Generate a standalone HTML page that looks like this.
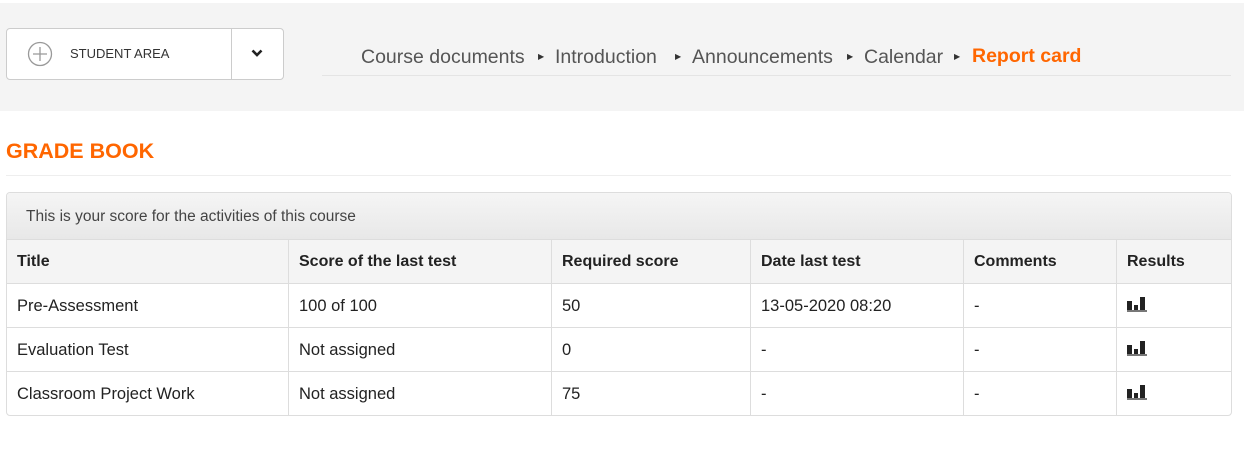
<!DOCTYPE html>
<html><head><style>
body{margin:0;width:1244px;height:453px;background:#fff;font-family:"Liberation Sans",sans-serif;color:#222;position:relative;overflow:hidden}
.band{position:absolute;left:0;top:3px;width:1244px;height:108px;background:#f4f4f4}
.btn{position:absolute;left:6px;top:28px;width:276px;height:50px;background:#fff;border:1px solid #ccc;border-radius:4px}
.btn .sep{position:absolute;left:224px;top:0;width:1px;height:50px;background:#ccc}
.crumbs{position:absolute;left:322px;top:42px;width:909px;height:33px;border-bottom:1px solid #e4e4e4;font-size:19.5px;color:#555}
.crumbs span{position:absolute;top:4px}
.tri{font-size:8px;top:10px!important;color:#333}
h1{position:absolute;left:6px;top:139px;margin:0;font-size:21.5px;color:#f60;font-weight:bold}
.hr{position:absolute;left:6px;top:175px;width:1225px;height:1px;background:#eee}
.panel{position:absolute;left:6px;top:192px;width:1224px;height:222px;border:1px solid #ddd;border-radius:4px;overflow:hidden}
.cap{height:46px;background:linear-gradient(#f5f5f5,#e8e8e8);border-bottom:1px solid #ddd;font-size:15.5px;color:#444;line-height:48px;padding-left:19px}
table{border-collapse:collapse;width:1224px;font-size:16.5px}
td,th{border-right:1px solid #ddd;border-bottom:1px solid #ddd;height:42px;padding:1px 0 0 10px;text-align:left;box-sizing:content-box}
th{background:#f4f4f4;font-weight:bold;font-size:16px}
tr:last-child td{border-bottom:none}
td:last-child,th:last-child{border-right:none}
</style></head><body>
<div class="band"></div>
<div class="btn">
<svg style="position:absolute;left:20px;top:12px" width="26" height="26"><circle cx="13" cy="13" r="11.5" fill="none" stroke="#999" stroke-width="1.3"/><path d="M13 6v14M6 13h14" stroke="#999" stroke-width="1.3"/></svg>
<div style="position:absolute;left:63px;top:17px;font-size:13px;color:#333">STUDENT AREA</div>
<div class="sep"></div>
<svg style="position:absolute;left:244px;top:20px" width="12" height="9"><path d="M1.5 1.5L6 6l4.5-4.5" fill="none" stroke="#222" stroke-width="2.6"/></svg>
</div>
<div class="crumbs">
<span style="left:39px">Course documents</span><span class="tri" style="left:216px">▶</span>
<span style="left:233px">Introduction</span><span class="tri" style="left:353px">▶</span>
<span style="left:370px">Announcements</span><span class="tri" style="left:525px">▶</span>
<span style="left:542px">Calendar</span><span class="tri" style="left:632px">▶</span>
<span style="left:650px;color:#f60;font-weight:bold;top:3px">Report card</span>
</div>
<h1>GRADE BOOK</h1>
<div class="hr"></div>
<div class="panel">
<div class="cap">This is your score for the activities of this course</div>
<table>
<tr><th style="width:271px">Title</th><th style="width:252px">Score of the last test</th><th style="width:188px">Required score</th><th style="width:202px">Date last test</th><th style="width:142px">Comments</th><th>Results</th></tr>
<tr><td>Pre-Assessment</td><td>100 of 100</td><td>50</td><td>13-05-2020 08:20</td><td>-</td><td><svg width="20" height="16"><rect x="0" y="5" width="5" height="9" fill="#222"/><rect x="7" y="9" width="4" height="5" fill="#222"/><rect x="13" y="1" width="5" height="13" fill="#222"/><rect x="0" y="14" width="20" height="2" fill="#777"/></svg></td></tr>
<tr><td>Evaluation Test</td><td>Not assigned</td><td>0</td><td>-</td><td>-</td><td><svg width="20" height="16"><rect x="0" y="5" width="5" height="9" fill="#222"/><rect x="7" y="9" width="4" height="5" fill="#222"/><rect x="13" y="1" width="5" height="13" fill="#222"/><rect x="0" y="14" width="20" height="2" fill="#777"/></svg></td></tr>
<tr><td>Classroom Project Work</td><td>Not assigned</td><td>75</td><td>-</td><td>-</td><td><svg width="20" height="16"><rect x="0" y="5" width="5" height="9" fill="#222"/><rect x="7" y="9" width="4" height="5" fill="#222"/><rect x="13" y="1" width="5" height="13" fill="#222"/><rect x="0" y="14" width="20" height="2" fill="#777"/></svg></td></tr>
</table>
</div>
</body></html>
